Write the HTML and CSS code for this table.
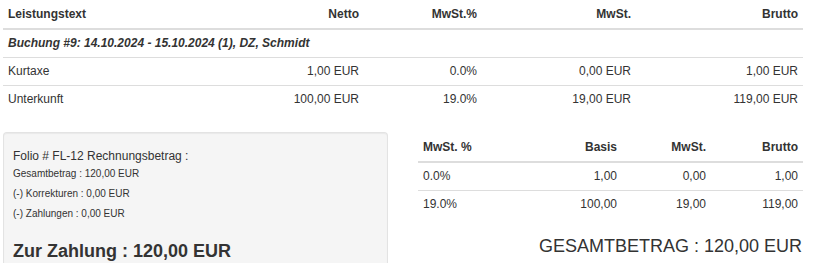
FILE: index.html
```html
<!DOCTYPE html>
<html>
<head>
<meta charset="utf-8">
<link rel="stylesheet" href="styles.css">
</head>
<body>
<div class="page">
  <table class="tbl main">
    <colgroup><col class="c1"><col class="c2"><col class="c3"><col class="c4"><col class="c5"></colgroup>
    <thead>
      <tr><th class="l">Leistungstext</th><th>Netto</th><th>MwSt.%</th><th>MwSt.</th><th>Brutto</th></tr>
    </thead>
    <tbody>
      <tr><td colspan="5" class="l group">Buchung #9: 14.10.2024 - 15.10.2024 (1), DZ, Schmidt</td></tr>
      <tr><td class="l">Kurtaxe</td><td>1,00 EUR</td><td>0.0%</td><td>0,00 EUR</td><td>1,00 EUR</td></tr>
      <tr><td class="l">Unterkunft</td><td>100,00 EUR</td><td>19.0%</td><td>19,00 EUR</td><td>119,00 EUR</td></tr>
    </tbody>
  </table>

  <div class="bottom">
    <div class="well">
      <div class="folio">Folio # FL-12 Rechnungsbetrag :</div>
      <div class="small">Gesamtbetrag : 120,00 EUR</div>
      <div class="small">(-) Korrekturen : 0,00 EUR</div>
      <div class="small">(-) Zahlungen : 0,00 EUR</div>
      <div class="due">Zur Zahlung : 120,00 EUR</div>
    </div>
    <div class="right">
      <table class="tbl vat">
        <colgroup><col class="v1"><col class="v2"><col class="v3"><col class="v4"></colgroup>
        <thead>
          <tr><th class="l">MwSt. %</th><th>Basis</th><th>MwSt.</th><th>Brutto</th></tr>
        </thead>
        <tbody>
          <tr><td class="l">0.0%</td><td>1,00</td><td>0,00</td><td>1,00</td></tr>
          <tr><td class="l">19.0%</td><td>100,00</td><td>19,00</td><td>119,00</td></tr>
        </tbody>
      </table>
      <div class="total">GESAMTBETRAG : 120,00 EUR</div>
    </div>
  </div>
</div>
</body>
</html>
```
FILE: styles.css
```css
html, body {
  margin: 0;
  padding: 0;
  background: #fff;
}
body {
  font-family: "Liberation Sans", Arial, sans-serif;
  font-size: 12px;
  color: #333;
}
.page {
  padding: 1px 3px 0;
  width: 800px;
}
.tbl {
  border-collapse: collapse;
  table-layout: fixed;
  width: 100%;
}
.tbl th, .tbl td {
  padding: 5px;
  line-height: 17px;
  text-align: right;
  white-space: nowrap;
}
.tbl th {
  font-weight: bold;
  border-bottom: 2px solid #ddd;
}
.tbl tbody td {
  border-top: 1px solid #ddd;
}
.tbl tbody tr:first-child td {
  border-top: 0;
}
.tbl .l {
  text-align: left;
}
.tbl td.group {
  font-weight: bold;
  font-style: italic;
}
.main .c1 { width: 206px; }
.main .c2 { width: 155px; }
.main .c3 { width: 118px; }
.main .c4 { width: 154px; }
.main .c5 { width: 167px; }

.bottom {
  display: grid;
  grid-template-columns: 385px 385px;
  column-gap: 30px;
  margin-top: 19px;
}
.well {
  background: #f5f5f5;
  border: 1px solid #e3e3e3;
  border-bottom: 0;
  border-radius: 4px 4px 0 0;
  box-shadow: inset 0 1px 1px rgba(0,0,0,0.05);
  padding: 15px 8px 20px 9px;
  height: 140px;
}
.folio {
  font-size: 12px;
  line-height: 16px;
}
.small {
  font-size: 10px;
  line-height: 20px;
}
.small:first-of-type {
  margin-top: 1px;
}
.due {
  margin-top: 17px;
  font-size: 18px;
  line-height: 20px;
  font-weight: bold;
}
.vat {
  margin-top: 2px;
}
.vat .v1 { width: 100px; }
.vat .v2 { width: 104px; }
.vat .v3 { width: 89px; }
.vat .v4 { width: 92px; }
.total {
  margin-top: 18px;
  text-align: right;
  font-size: 18px;
  line-height: 20px;
  padding-right: 1px;
}
```
